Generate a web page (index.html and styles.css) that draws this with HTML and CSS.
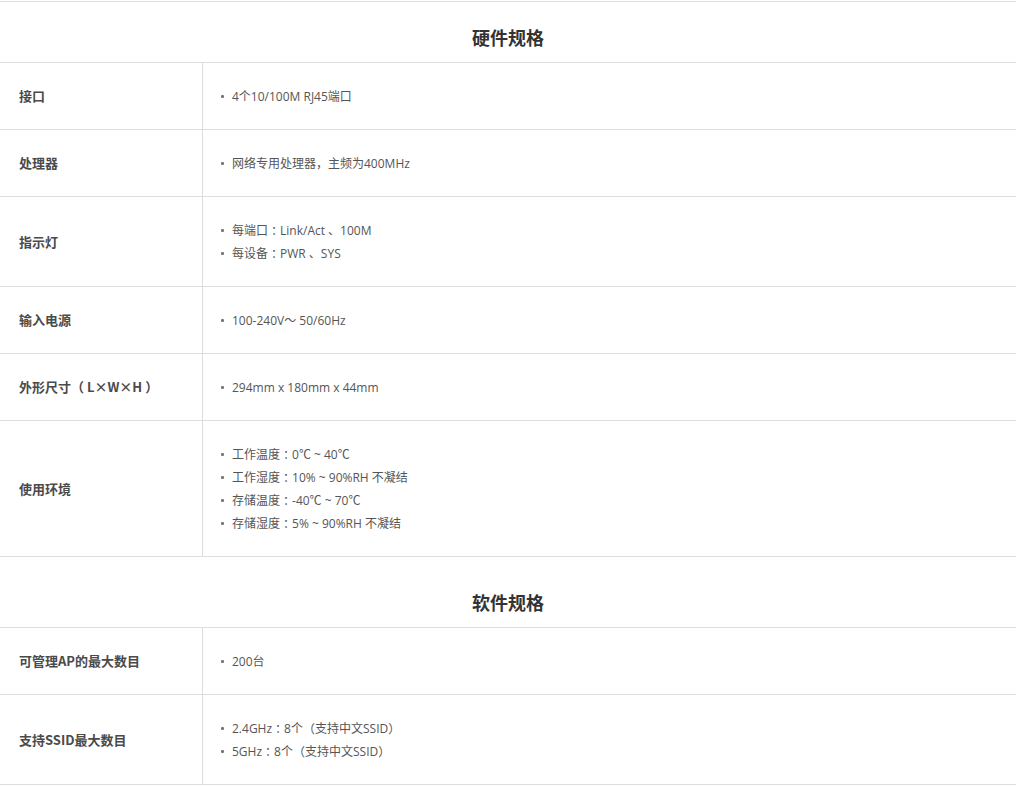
FILE: index.html
```html
<!DOCTYPE html>
<html lang="zh-CN">
<head>
<meta charset="utf-8">
<title>规格参数</title>
<link rel="stylesheet" href="styles.css">
</head>
<body>
<div class="page">
  <div class="top-rule"></div>
  <section class="spec">
    <h2 class="spec-title">硬件规格</h2>
    <div class="spec-row">
      <div class="spec-label">接口</div>
      <ul class="spec-value"><li>4个10/100M RJ45端口</li></ul>
    </div>
    <div class="spec-row">
      <div class="spec-label">处理器</div>
      <ul class="spec-value"><li>网络专用处理器，主频为400MHz</li></ul>
    </div>
    <div class="spec-row">
      <div class="spec-label">指示灯</div>
      <ul class="spec-value"><li>每端口<span class="fw">：</span>Link/Act 、100M</li><li>每设备<span class="fw">：</span>PWR 、SYS</li></ul>
    </div>
    <div class="spec-row">
      <div class="spec-label">输入电源</div>
      <ul class="spec-value"><li>100-240V～ 50/60Hz</li></ul>
    </div>
    <div class="spec-row">
      <div class="spec-label">外形尺寸（ L×W×H ）</div>
      <ul class="spec-value"><li>294mm x 180mm x 44mm</li></ul>
    </div>
    <div class="spec-row">
      <div class="spec-label">使用环境</div>
      <ul class="spec-value">
        <li>工作温度<span class="fw">：</span>0℃ ~ 40℃</li>
        <li>工作湿度<span class="fw">：</span>10% ~ 90%RH 不凝结</li>
        <li>存储温度<span class="fw">：</span>-40℃ ~ 70℃</li>
        <li>存储湿度<span class="fw">：</span>5% ~ 90%RH 不凝结</li>
      </ul>
    </div>
  </section>
  <section class="spec spec-next">
    <h2 class="spec-title">软件规格</h2>
    <div class="spec-row">
      <div class="spec-label">可管理AP的最大数目</div>
      <ul class="spec-value"><li>200台</li></ul>
    </div>
    <div class="spec-row">
      <div class="spec-label">支持SSID最大数目</div>
      <ul class="spec-value"><li>2.4GHz<span class="fw">：</span>8个<span class="fw">（</span>支持中文SSID<span class="fw">）</span></li><li>5GHz<span class="fw">：</span>8个<span class="fw">（</span>支持中文SSID<span class="fw">）</span></li></ul>
    </div>
  </section>
</div>
</body>
</html>
```
FILE: styles.css
```css
html, body {
  margin: 0;
  padding: 0;
  background: #fff;
}
body {
  font-family: "Open Sans", "Noto Sans CJK SC", sans-serif;
  color: #555;
}
.page {
  width: 1016px;
}
.top-rule {
  margin-top: 1px;
  border-top: 1px solid #e2e2e2;
}
.spec-title {
  margin: 0;
  box-sizing: content-box;
  border-bottom: 1px solid #dedede;
  display: flex;
  align-items: center;
  justify-content: center;
  padding-top: 10px;
  height: 50px;
  font-family: "Noto Sans CJK SC", sans-serif;
  font-size: 18px;
  font-weight: 700;
  color: #333;
  line-height: 24px;
}
.spec-next .spec-title {
  padding-top: 20px;
}
.spec-row {
  display: grid;
  grid-template-columns: 203px 1fr;
  border-bottom: 1px solid #dedede;
}
.spec-label {
  box-sizing: border-box;
  border-right: 1px solid #dedede;
  padding: 0 0 1px 19px;
  display: flex;
  align-items: center;
  font-family: "Noto Sans CJK SC", sans-serif;
  font-size: 13px;
  font-weight: 700;
  color: #4a4a4a;
}
.spec-value {
  list-style: none;
  margin: 0;
  padding: 22px 0 21px 18px;
  font-size: 12px;
  line-height: 23px;
  color: #555;
}
.spec-value li {
  display: flex;
  align-items: center;
}
.spec-value li::before {
  content: "";
  width: 3px;
  height: 3px;
  border-radius: 1px;
  background: #777;
  margin-right: 8px;
  flex: none;
}
.fw {
  font-family: "Noto Sans CJK TC", sans-serif;
}
```
